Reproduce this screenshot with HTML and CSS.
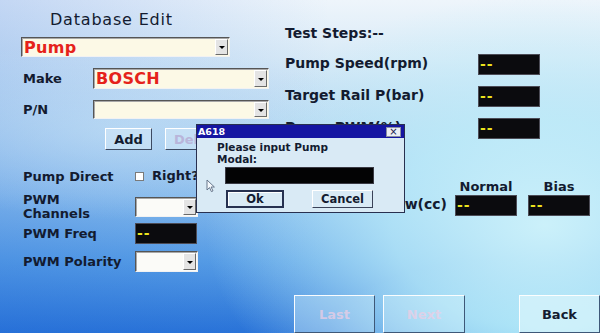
FILE: index.html
```html
<!DOCTYPE html>
<html>
<head>
<meta charset="utf-8">
<title>Database Edit</title>
<link rel="stylesheet" href="styles.css">
</head>
<body>
<div class="screen">
  <div class="main">
    <section class="left">
      <h1 class="title">Database Edit</h1>
      <div class="select select-type"><span class="val red">Pump</span><span class="arrow"></span></div>
      <div class="row row-make">
        <span class="lbl">Make</span>
        <div class="select select-wide"><span class="val red">BOSCH</span><span class="arrow"></span></div>
      </div>
      <div class="row row-pn">
        <span class="lbl">P/N</span>
        <div class="select select-wide select-pn"><span class="val"></span><span class="arrow"></span></div>
      </div>
      <div class="actions">
        <button class="btn btn-add">Add</button>
        <button class="btn btn-del">Delete</button>
      </div>
      <div class="row row-dir">
        <span class="lbl lbl-w">Pump Direct</span>
        <span class="check"></span>
        <span class="right-q">Right?</span>
      </div>
      <div class="row row-ch">
        <span class="lbl lbl-w lbl-2">PWM<br>Channels</span>
        <div class="select select-sm"><span class="val"></span><span class="arrow"></span></div>
      </div>
      <div class="row row-freq">
        <span class="lbl lbl-w">PWM Freq</span>
        <span class="lcd lcd-sm">--</span>
      </div>
      <div class="row row-pol">
        <span class="lbl lbl-w">PWM Polarity</span>
        <div class="select select-sm"><span class="val"></span><span class="arrow"></span></div>
      </div>
    </section>
    <section class="right">
      <div class="steps">Test Steps:--</div>
      <div class="params">
        <span class="plbl">Pump Speed(rpm)</span><span class="lcd">--</span>
        <span class="plbl">Target Rail P(bar)</span><span class="lcd">--</span>
        <span class="plbl">Pump PWM(%)</span><span class="lcd">--</span>
      </div>
      <div class="flow">
        <span></span><span class="hdr">Normal</span><span class="hdr">Bias</span>
        <span class="flbl">Return Flow(cc)</span><span class="lcd">--</span><span class="lcd">--</span>
      </div>
    </section>
  </div>
  <div class="footer">
    <button class="fbtn off">Last</button>
    <button class="fbtn off fbtn-next">Next</button>
    <button class="fbtn fbtn-back">Back</button>
  </div>
</div>

<div class="dialog">
  <div class="dtitle"><span>A618</span><span class="dclose">×</span></div>
  <div class="dmsg">Please input Pump<br>Modal:</div>
  <div class="dinput"></div>
  <div class="dbtns">
    <button class="dbtn dbtn-ok">Ok</button>
    <button class="dbtn dbtn-cancel">Cancel</button>
  </div>
</div>

<svg class="cursor" width="10" height="14" viewBox="0 0 10 14">
  <path d="M1 1 L1 11 L3.5 8.6 L5.4 12.6 L7 11.9 L5.1 8 L8.4 8 Z" fill="#f4f8fc" stroke="#5a6a80" stroke-width="0.9" stroke-linejoin="round"/>
</svg>
</body>
</html>
```

FILE: styles.css
```css
* { box-sizing: border-box; margin: 0; padding: 0; }

html, body { width: 600px; height: 333px; overflow: hidden; }

body {
  position: relative;
  font-family: "DejaVu Sans", Verdana, sans-serif;
  font-weight: bold;
  color: #131b30;
  background:
    radial-gradient(ellipse 340px 230px at 545px 225px, rgba(208,244,251,0.95) 0%, rgba(192,239,250,0.75) 45%, rgba(165,228,247,0) 100%),
    radial-gradient(ellipse 230px 70px at 560px 325px, rgba(140,226,246,0.85), rgba(140,226,246,0)),
    radial-gradient(ellipse 260px 90px at 120px 130px, rgba(200,228,248,0.55), rgba(200,228,248,0)),
    linear-gradient(90deg, rgba(25,95,215,0.2) 0%, rgba(25,95,215,0) 55%),
    linear-gradient(180deg, #eef5fb 0%, #d8eaf7 18%, #b6d7f1 38%, #90c2ee 58%, #5aa0e6 78%, #2a74d8 100%);
}

button { font-family: inherit; font-weight: bold; cursor: default; }

.screen { display: flex; flex-direction: column; height: 333px; }
.main { flex: 1; display: flex; }

/* ---------- left panel ---------- */
.left { width: 285px; padding: 10px 0 0 21px; }

.title {
  font-size: 16px;
  font-weight: normal;
  letter-spacing: 0.8px;
  line-height: 20px;
  margin-left: 29px;
}

.select {
  display: flex;
  height: 21px;
  background: #fcf9e6;
  border: 1px solid;
  border-color: #555 #f2f2f2 #f2f2f2 #555;
  box-shadow: inset 1px 1px 0 #a8a8a8;
}
.select .val {
  flex: 1;
  font-size: 16px;
  line-height: 19px;
  padding-left: 2px;
  letter-spacing: 0.3px;
}
.red { color: #e5221a; }
.arrow {
  position: relative;
  width: 13px;
  margin: 1px 1px 1px 0;
  background: #e4e4e4;
  border: 1px solid;
  border-color: #fff #6a6a6a #6a6a6a #fff;
}
.arrow::after {
  content: "";
  position: absolute;
  left: 50%;
  top: 50%;
  margin: -1px 0 0 -3px;
  border-left: 3px solid transparent;
  border-right: 3px solid transparent;
  border-top: 3px solid #000;
}

.select-type { width: 209px; height: 20px; margin-top: 7px; }

.row { display: flex; align-items: center; }
.lbl { width: 72px; padding-left: 2px; font-size: 13px; line-height: 16px; white-space: nowrap; }
.lbl-w { width: 114px; }
.lbl-2 { line-height: 14px; }

.select-wide { width: 176px; }
.row-make { margin-top: 11px; }
.row-pn { margin-top: 11px; }
.select-pn { height: 19px; }

.actions { display: flex; gap: 13px; margin-top: 9px; padding-left: 84px; }
.btn {
  height: 22px;
  font-size: 13px;
  padding: 0 8px;
  color: #131b30;
  background: rgba(214,234,248,0.55);
  border: 1px solid;
  border-color: #fff #3c4a62 #3c4a62 #fff;
}
.btn-add { width: 47px; }
.btn-del { width: 56px; color: #b9b5da; }

.row-dir { margin-top: 19px; }
.check {
  width: 9px;
  height: 9px;
  background: #fff;
  border: 1px solid #7a7a7a;
  margin-top: -2px;
}
.right-q { margin-left: 8px; font-size: 13px; line-height: 16px; margin-top: -3px; }

.row-ch { margin-top: 8px; }
.select-sm { width: 63px; height: 20px; background: #fbfbf8; }
.row-freq { margin-top: 2px; }
.row-pol { margin-top: 7px; }
.row-pol .select-sm { height: 21px; }

.lcd {
  display: block;
  height: 21px;
  background: #0b0b0e;
  border: 1px solid #4c4c56;
  color: #ece21e;
  font-size: 14px;
  line-height: 19px;
  padding-left: 1px;
  letter-spacing: 1px;
}
.lcd-sm { width: 62px; }

/* ---------- right panel ---------- */
.right { flex: 1; padding-top: 24px; }
.steps { font-size: 14px; line-height: 18px; }

.params {
  display: grid;
  grid-template-columns: 193px 62px;
  grid-auto-rows: 21px;
  row-gap: 11px;
  align-items: center;
  margin-top: 12px;
}
.plbl { font-size: 14px; line-height: 18px; white-space: nowrap; margin-top: -3px; }

.flow {
  display: grid;
  grid-template-columns: 159px 62px 62px;
  grid-template-rows: 16px 21px;
  column-gap: 11px;
  margin-top: 40px;
}
.hdr { font-size: 13px; line-height: 16px; text-align: center; }
.flbl {
  font-size: 14px;
  line-height: 18px;
  text-align: right;
  white-space: nowrap;
  margin-right: -3px;
}

/* ---------- footer ---------- */
.footer { display: flex; height: 38px; padding-left: 294px; gap: 8px; }
.fbtn {
  width: 82px;
  height: 38px;
  font-size: 13px;
  color: #131b30;
  background: rgba(220,245,252,0.35);
  border: 1px solid;
  border-color: rgba(255,255,255,0.95) #3e5878 #3e5878 rgba(255,255,255,0.95);
}
.fbtn.off { color: rgba(236,205,228,0.75); }
.fbtn-next { width: 83px; }
.fbtn-back { margin-left: 46px; width: 82px; background: rgba(225,247,252,0.6); }

/* ---------- dialog ---------- */
.dialog {
  position: absolute;
  left: 196px;
  top: 124px;
  width: 209px;
  height: 89px;
  background: #d9eaf5;
  border: 1px solid #283050;
}
.dtitle {
  display: flex;
  justify-content: space-between;
  align-items: center;
  height: 13px;
  background: #1515a2;
  color: #fff;
  font-size: 9.5px;
  line-height: 13px;
  padding-left: 1px;
}
.dclose {
  width: 15px;
  height: 10px;
  margin-right: 3px;
  background: #eceef3;
  border: 1px solid #8a90a0;
  color: #1a2050;
  font-size: 10px;
  line-height: 8px;
  text-align: center;
  font-weight: normal;
}
.dmsg { font-size: 10.5px; line-height: 11.5px; margin: 4px 0 0 20px; }
.dinput {
  width: 149px;
  height: 17px;
  margin: 2px 0 0 28px;
  background: #030304;
  border: 1px solid #3a3a44;
}
.dbtns { display: flex; gap: 28px; margin-top: 6px; padding-left: 29px; }
.dbtn {
  height: 18px;
  font-size: 11.5px;
  color: #131b30;
  background: #d9eaf5;
  border: 1px solid;
  border-color: #fff #3a4258 #3a4258 #fff;
}
.dbtn-ok { width: 58px; border: 2px solid #263150; box-shadow: inset 1px 1px 0 #fff; }
.dbtn-cancel { width: 61px; }

.cursor { position: absolute; left: 206px; top: 179px; }
```
